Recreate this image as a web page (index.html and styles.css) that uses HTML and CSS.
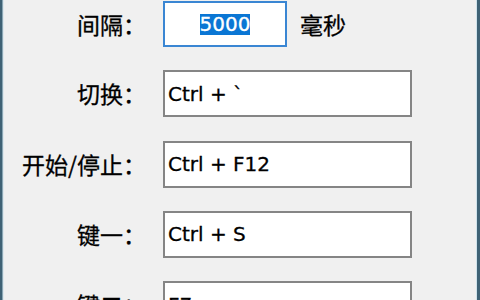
FILE: index.html
```html
<!DOCTYPE html>
<html lang="zh-CN">
<head>
<meta charset="utf-8">
<link rel="stylesheet" href="styles.css">
</head>
<body>
<div class="window">
  <div class="form">
    <div class="row first">
      <div class="label">间隔：</div>
      <div class="field focused short"><span class="sel">5000</span></div>
      <div class="unit">毫秒</div>
    </div>
    <div class="row">
      <div class="label">切换：</div>
      <div class="field">Ctrl + `</div>
    </div>
    <div class="row">
      <div class="label">开始/停止：</div>
      <div class="field">Ctrl + F12</div>
    </div>
    <div class="row">
      <div class="label">键一：</div>
      <div class="field">Ctrl + S</div>
    </div>
    <div class="row">
      <div class="label">键二：</div>
      <div class="field">F7</div>
    </div>
  </div>
</div>
</body>
</html>
```
FILE: styles.css
```css
html, body {
  margin: 0;
  padding: 0;
  width: 480px;
  height: 300px;
  overflow: hidden;
}
body {
  font-family: "DejaVu Sans", "Noto Sans CJK SC", sans-serif;
  color: #000;
}
.window {
  box-sizing: border-box;
  width: 480px;
  height: 300px;
  background: #f0f0f0;
  border-left: 2px solid #3f6275;
  border-right: 3px solid #3f6275;
  box-shadow: inset 1px 0 0 #8aa6b4, inset 2px 0 0 #dde7ec, inset -1px 0 0 #cfe3ec;
  overflow: hidden;
}
.form {
  display: flex;
  flex-direction: column;
  gap: 23.3px;
  padding-top: 1px;
}
.row {
  display: flex;
  align-items: center;
  height: 47px;
  flex: none;
}
.row.first {
  height: 46px;
}
.label {
  flex: none;
  width: 144px;
  margin-right: 17px;
  text-align: right;
  font-family: "Noto Sans CJK SC", sans-serif;
  font-size: 23px;
  line-height: 1;
  white-space: nowrap;
  -webkit-text-stroke: 0.3px #000;
}
.field {
  box-sizing: border-box;
  flex: none;
  width: 249px;
  height: 100%;
  border: 2px solid #858585;
  background: #fff;
  display: flex;
  align-items: center;
  padding-left: 3px;
  font-size: 20px;
  white-space: nowrap;
  -webkit-text-stroke: 0.3px #000;
}
.field.short {
  width: 124px;
  justify-content: center;
  padding-left: 0;
}
.field.focused {
  border-color: #3a86d3;
}
.sel {
  background: #0a76d4;
  color: #fff;
  line-height: 21px;
  -webkit-text-stroke: 0.3px #fff;
}
.unit {
  margin-left: 13px;
  font-family: "Noto Sans CJK SC", sans-serif;
  font-size: 23px;
  line-height: 1;
  -webkit-text-stroke: 0.3px #000;
}
```
